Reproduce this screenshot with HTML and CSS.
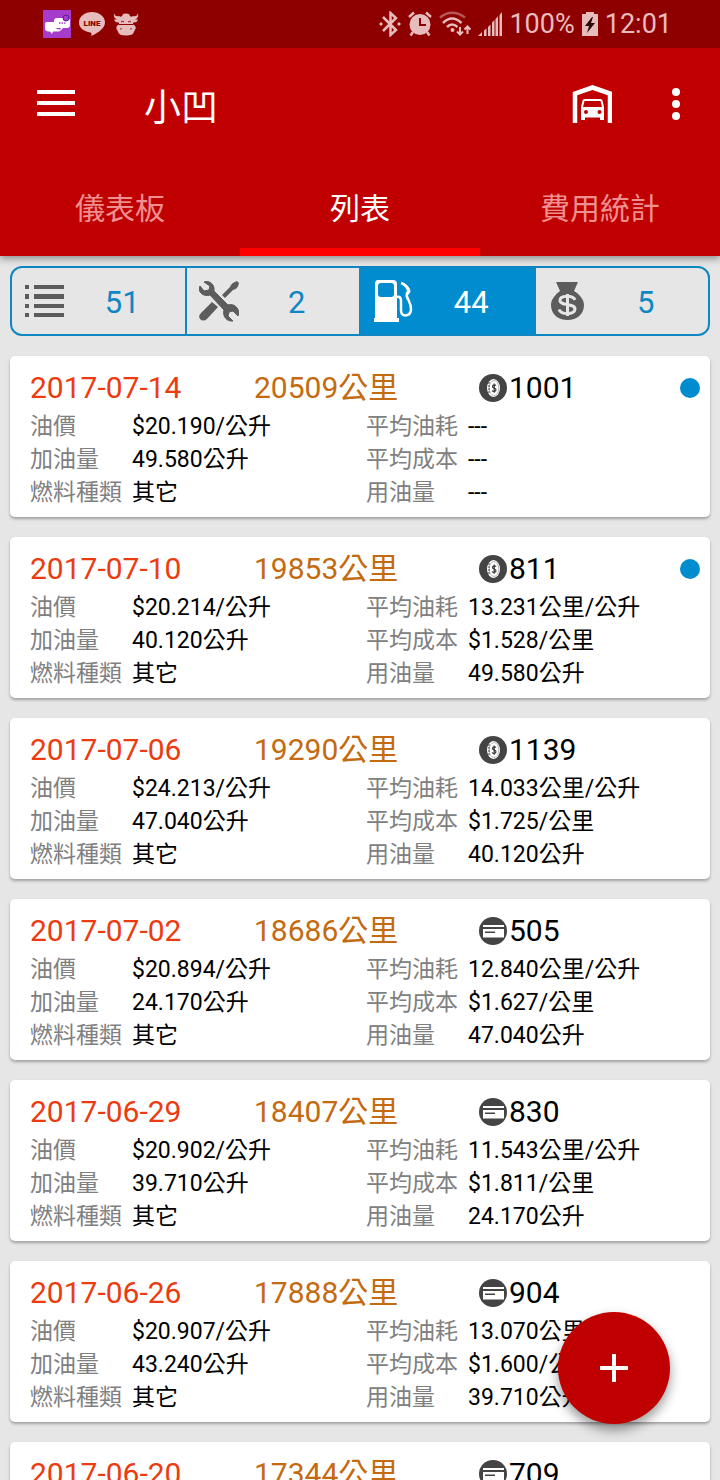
FILE: index.html
```html
<!DOCTYPE html>
<html lang="zh-Hant">
<head>
  <meta charset="UTF-8">
  <meta name="viewport" content="width=device-width, initial-scale=1">
  <title>小凹</title>

  <link rel="stylesheet" href="styles.css">
</head>
<body>
  <!-- shared icons -->
  <svg class="icon-defs" aria-hidden="true">
    <symbol id="icon-coin" viewBox="0 0 28 28">
      <circle cx="14" cy="14" r="14" fill="#444"/>
      <ellipse cx="14.500" cy="14" rx="6.500" ry="9" fill="#fff"/>
      <ellipse cx="15" cy="14" rx="4.800" ry="7.500" fill="none" stroke="#888" stroke-width="0.600"/>
      <path d="M10 8V20" stroke="#444" stroke-width="1" stroke-dasharray="2 1"/>
      <path d="M17 11.600C16 10.300 13.500 10.500 13.500 12.400C13.500 14.200 17 13.800 17 15.800C17 17.700 14 18 13 16.500M15.200 9.500V18.800" fill="none" stroke="#333" stroke-width="1.200"/>
    </symbol>
    <symbol id="icon-card" viewBox="0 0 28 28">
      <circle cx="14" cy="14" r="14" fill="#444"/>
      <path d="M4 8H25V20.500H4Z" fill="#fff"/>
      <path d="M4 10H25V12H4ZM6 14.500H16V16H6Z" fill="#444"/>
    </symbol>
  </svg>

  <div class="app">
    <header class="app-header">
      <div class="status-bar">
        <div class="status-group">
          <svg width="28" height="28" viewBox="0 0 28 28" aria-hidden="true">
            <rect width="28" height="28" rx="1" fill="#a63ccb"/>
            <path d="M4 12H12V16Q13 20 18 19.500V20Q17 21.500 15 21.500H10L9 24L7 21.500H5Q2 21 2 18V14Q2 12 4 12Z" fill="#fff"/>
            <path d="M14 8H24Q27 8 27 11V15Q27 18 24 18H20L18 20.500L17.500 18H14Q11 18 11 15V11Q11 8 14 8Z" fill="#fff"/>
            <path d="M16 13H17.500M18.500 13H20M21 13H22.500" stroke="#a63ccb" stroke-width="1.500"/>
            <circle cx="23" cy="8" r="3" fill="#a63ccb" stroke="#5b1c87" stroke-width="1"/>
          </svg>
          <svg width="26" height="26" viewBox="0 0 26 26" aria-hidden="true">
            <path d="M13 1C6 1 0 5.500 0 11.500C0 17 5 20.500 11.500 21.500C13 22 12.500 23.500 12 25C16 23.500 26 18 26 11.500C26 5.500 20 1 13 1Z" fill="#e6bcbc"/>
            <text class="line-text" x="13" y="15" text-anchor="middle">LINE</text>
          </svg>
          <svg width="26" height="26" viewBox="0 0 26 26" aria-hidden="true">
            <path d="M1 2Q2 6 6 5Q9 7 10 3Q13 2 16 3Q17 7 20 5Q24 6 25 2Q26 7 22 8.500H25Q24 12 20 11.500V13H6V11.500Q2 12 1 8.500H4Q0 7 1 2Z" fill="#e6bcbc"/>
            <path d="M6 13.500H20Q23.500 15 22.500 18Q21 20 21 21Q20 24.500 13 24.500Q6 24.500 5 21Q5 20 3.500 18Q2.500 15 6 13.500Z" fill="#e6bcbc"/>
            <path d="M8 11Q9.500 9.500 11 11M15 11Q16.500 9.500 18 11M6 13.500H20M8 17V18.500M18 17V18.500" fill="none" stroke="#8e0000" stroke-width="1"/>
          </svg>
        </div>
        <div class="status-group">
          <svg width="22" height="26" viewBox="0 0 22 26" aria-hidden="true">
            <path d="M4 6L17 19L11.500 24V2L17 7L4 20" fill="none" stroke="#e6bcbc" stroke-width="2.500"/>
            <path d="M2 11L4 13L2 15L0 13ZM20 11L22 13L20 15L18 13Z" fill="#e6bcbc"/>
          </svg>
          <svg width="24" height="26" viewBox="0 0 24 26" aria-hidden="true">
            <circle cx="12" cy="13.500" r="10.500" fill="#e6bcbc"/>
            <path d="M1 6L6 1.500M18 1.500L23 6M5 21L2.500 24.500M19 21L21.500 24.500" stroke="#e6bcbc" stroke-width="2.500"/>
            <path d="M12 7V14H18" fill="none" stroke="#8e0000" stroke-width="2"/>
          </svg>
          <svg width="32" height="26" viewBox="0 0 32 26" fill="none" aria-hidden="true">
            <path d="M1 6.500Q13 -3 26 6.500" stroke="#b65858" stroke-width="2.500"/>
            <path d="M4 12Q13 3 22.500 12M8 16Q13 11 18.500 16" stroke="#e6bcbc" stroke-width="2.500"/>
            <circle cx="13.500" cy="19" r="2" fill="#e6bcbc"/>
            <path d="M21 16V23.500M18 20.500L21 23.500L24 20.500M28.500 23V15.500M25.500 18.500L28.500 15.500L31.500 18.500" stroke="#e6bcbc" stroke-width="2"/>
          </svg>
          <svg width="24" height="26" viewBox="0 0 24 26" aria-hidden="true">
            <path d="M0 25L4 21V25ZM6 19.500L8.500 17.500V25H6ZM10 16L12.500 13.500V25H10ZM14 11.500L16.500 9V25H14ZM17.500 8L20 5.500V25H17.500ZM21.500 4L24 1V25H21.500Z" fill="#e6bcbc"/>
          </svg>
          <span class="status-text">100%</span>
          <svg width="16" height="26" viewBox="0 0 16 26" aria-hidden="true">
            <path d="M4 1H12V3H16V25H0V3H4Z" fill="#e6bcbc"/>
            <path d="M10 6L3 15H7L5 22L13 12H9L11 6Z" fill="#2e0808"/>
          </svg>
          <span class="status-text">12:01</span>
        </div>
      </div>

      <div class="toolbar">
        <button class="icon-button" type="button" aria-label="選單">
          <svg width="38" height="28" viewBox="0 0 38 28">
            <path d="M0 0H38V4H0ZM0 11H38V15H0ZM0 22H38V26H0Z" fill="#fff"/>
          </svg>
        </button>
        <h1 class="toolbar-title">小凹</h1>
        <button class="icon-button" type="button" aria-label="車庫">
          <svg width="40" height="38" viewBox="0 0 40 38">
            <path d="M3 38V8.500L20.500 2.500L38 8.500V38" fill="none" stroke="#fff" stroke-width="4.500"/>
            <path d="M12.500 14H28.500Q30 14 30.500 15.500L32 22V35H28V32.500H13V35H9V22L10.500 15.500Q11 14 12.500 14ZM12.500 16L11 22H30L28.500 16Z" fill="#fff" fill-rule="evenodd"/>
            <circle cx="14" cy="27" r="2" fill="#c00000"/>
            <circle cx="27.500" cy="27" r="2" fill="#c00000"/>
          </svg>
        </button>
        <button class="icon-button" type="button" aria-label="更多">
          <svg width="8" height="32" viewBox="0 0 8 32" fill="#fff">
            <circle cx="4" cy="4" r="4"/>
            <circle cx="4" cy="16" r="4"/>
            <circle cx="4" cy="28" r="4"/>
          </svg>
        </button>
      </div>

      <nav class="tabs">
        <button class="tab" type="button">儀表板</button>
        <button class="tab tab-active" type="button" aria-current="page">列表</button>
        <button class="tab" type="button">費用統計</button>
      </nav>
    </header>

    <main class="content">
      <div class="filters">
        <button class="filter" type="button" aria-pressed="false">
          <svg width="40" height="42" viewBox="0 0 40 42" fill="#5c5c5c" aria-hidden="true">
            <path d="M1 5H5V9H1ZM10 5H40V9H10ZM1 14H5V19H1ZM10 14H40V19H10ZM1 24H5V28H1ZM10 24H40V28H10ZM1 33H5V37H1ZM10 33H40V37H10Z"/>
          </svg>
          <span class="filter-count">51</span>
        </button>
        <button class="filter" type="button" aria-pressed="false">
          <svg width="40" height="42" viewBox="0 0 40 42" fill="#5c5c5c" aria-hidden="true">
            <path d="M13 22L19 27L8 39Q4 42 1 39Q-1 36 2 33Z"/>
            <path d="M23 15L31 7Q32 3 38 1L40 3Q39 9 34 10L26 18Z"/>
            <path d="M5 2C10 0 16 4 15 11L29 25C35 23 40 28 40 34L39 36L34 31L30 32L29 36L34 41C28 42 23 36 25 30L11 15C5 17 0 13 0 8L1 6L5 11L10 10L11 6Z" stroke="#5c5c5c"/>
          </svg>
          <span class="filter-count">2</span>
        </button>
        <button class="filter filter-active" type="button" aria-pressed="true">
          <svg width="40" height="42" viewBox="0 0 40 42" aria-hidden="true">
            <path d="M5 0H20Q24 0 24 4V38H26V42H1V38H2V4Q2 0 5 0ZM8 3Q5 3 5 6V14Q5 17 8 17H18Q21 17 21 14V6Q21 3 18 3Z" fill="#fff" fill-rule="evenodd"/>
            <path d="M24 17Q28 16 28 21V30Q28 35.500 32.500 35.500Q38 35 38 29Q38 25 35.500 20Q33 17 34 13L36 11Q34 5 28 3" fill="none" stroke="#fff" stroke-width="2.500"/>
            <path d="M30 3Q37 6 37.500 12L35 15Q34 8 30 5Z" fill="#fff"/>
          </svg>
          <span class="filter-count">44</span>
        </button>
        <button class="filter" type="button" aria-pressed="false">
          <svg width="40" height="42" viewBox="0 0 40 42" aria-hidden="true">
            <path d="M8 2H30L26 11C31 14 36 19 36 25C36 34 29 40 19.500 40C10 40 3 34 3 25C3 19 8 14 12 11Z" fill="#5c5c5c"/>
            <path d="M27 20C25 15 12 15 12 20.500C12 26 27 23 27 29C27 35 13 35 11 29.500M19.500 14V36" fill="none" stroke="#e6e6e6" stroke-width="3"/>
          </svg>
          <span class="filter-count">5</span>
        </button>
      </div>

      <article class="card">
        <div class="card-header">
          <span class="date">2017-07-14</span>
          <span class="mileage">20509公里</span>
          <span class="amount"><svg class="pay-icon" aria-hidden="true"><use href="#icon-coin"/></svg>1001<i class="dot"></i></span>
        </div>
        <dl class="details">
          <dt>油價</dt><dd>$20.190/公升</dd>
          <dt>平均油耗</dt><dd>---</dd>
          <dt>加油量</dt><dd>49.580公升</dd>
          <dt>平均成本</dt><dd>---</dd>
          <dt>燃料種類</dt><dd>其它</dd>
          <dt>用油量</dt><dd>---</dd>
        </dl>
      </article>

      <article class="card">
        <div class="card-header">
          <span class="date">2017-07-10</span>
          <span class="mileage">19853公里</span>
          <span class="amount"><svg class="pay-icon" aria-hidden="true"><use href="#icon-coin"/></svg>811<i class="dot"></i></span>
        </div>
        <dl class="details">
          <dt>油價</dt><dd>$20.214/公升</dd>
          <dt>平均油耗</dt><dd>13.231公里/公升</dd>
          <dt>加油量</dt><dd>40.120公升</dd>
          <dt>平均成本</dt><dd>$1.528/公里</dd>
          <dt>燃料種類</dt><dd>其它</dd>
          <dt>用油量</dt><dd>49.580公升</dd>
        </dl>
      </article>

      <article class="card">
        <div class="card-header">
          <span class="date">2017-07-06</span>
          <span class="mileage">19290公里</span>
          <span class="amount"><svg class="pay-icon" aria-hidden="true"><use href="#icon-coin"/></svg>1139</span>
        </div>
        <dl class="details">
          <dt>油價</dt><dd>$24.213/公升</dd>
          <dt>平均油耗</dt><dd>14.033公里/公升</dd>
          <dt>加油量</dt><dd>47.040公升</dd>
          <dt>平均成本</dt><dd>$1.725/公里</dd>
          <dt>燃料種類</dt><dd>其它</dd>
          <dt>用油量</dt><dd>40.120公升</dd>
        </dl>
      </article>

      <article class="card">
        <div class="card-header">
          <span class="date">2017-07-02</span>
          <span class="mileage">18686公里</span>
          <span class="amount"><svg class="pay-icon" aria-hidden="true"><use href="#icon-card"/></svg>505</span>
        </div>
        <dl class="details">
          <dt>油價</dt><dd>$20.894/公升</dd>
          <dt>平均油耗</dt><dd>12.840公里/公升</dd>
          <dt>加油量</dt><dd>24.170公升</dd>
          <dt>平均成本</dt><dd>$1.627/公里</dd>
          <dt>燃料種類</dt><dd>其它</dd>
          <dt>用油量</dt><dd>47.040公升</dd>
        </dl>
      </article>

      <article class="card">
        <div class="card-header">
          <span class="date">2017-06-29</span>
          <span class="mileage">18407公里</span>
          <span class="amount"><svg class="pay-icon" aria-hidden="true"><use href="#icon-card"/></svg>830</span>
        </div>
        <dl class="details">
          <dt>油價</dt><dd>$20.902/公升</dd>
          <dt>平均油耗</dt><dd>11.543公里/公升</dd>
          <dt>加油量</dt><dd>39.710公升</dd>
          <dt>平均成本</dt><dd>$1.811/公里</dd>
          <dt>燃料種類</dt><dd>其它</dd>
          <dt>用油量</dt><dd>24.170公升</dd>
        </dl>
      </article>

      <article class="card">
        <div class="card-header">
          <span class="date">2017-06-26</span>
          <span class="mileage">17888公里</span>
          <span class="amount"><svg class="pay-icon" aria-hidden="true"><use href="#icon-card"/></svg>904</span>
        </div>
        <dl class="details">
          <dt>油價</dt><dd>$20.907/公升</dd>
          <dt>平均油耗</dt><dd>13.070公里/公升</dd>
          <dt>加油量</dt><dd>43.240公升</dd>
          <dt>平均成本</dt><dd>$1.600/公里</dd>
          <dt>燃料種類</dt><dd>其它</dd>
          <dt>用油量</dt><dd>39.710公升</dd>
        </dl>
      </article>

      <article class="card">
        <div class="card-header">
          <span class="date">2017-06-20</span>
          <span class="mileage">17344公里</span>
          <span class="amount"><svg class="pay-icon" aria-hidden="true"><use href="#icon-card"/></svg>709</span>
        </div>
      </article>
    </main>

    <button class="fab" type="button" aria-label="新增">
      <svg width="28" height="28" viewBox="0 0 28 28">
        <path d="M12 0H16V12H28V16H16V28H12V16H0V12H12Z" fill="#fff"/>
      </svg>
    </button>
  </div>
</body>
</html>
```
FILE: styles.css
```css
* {
  box-sizing: border-box;
}

body {
  background-color: #e6e6e6;
  color: #000;
  font-family: Roboto, "Noto Sans CJK TC", sans-serif;
  margin: 0;
}

button {
  background: none;
  border: 0;
  cursor: pointer;
  font-family: inherit;
  padding: 0;
}

svg {
  display: block;
  flex: none;
}

.icon-defs {
  height: 0;
  position: absolute;
  width: 0;
}

.app {
  display: flex;
  flex-direction: column;
  height: 100vh;
}

/* header */
.app-header {
  background-color: #c00000;
  box-shadow: 0 2px 8px rgba(0, 0, 0, 0.45);
  flex: none;
  z-index: 1;
}

.status-bar {
  align-items: center;
  background-color: #8e0000;
  display: flex;
  height: 48px;
  justify-content: space-between;
  padding: 0 48px 0 43px;
}

.status-group {
  align-items: center;
  display: flex;
  gap: 8px;
}

.status-group + .status-group {
  gap: 7px;
}

.status-text {
  color: #e6bcbc;
  font-size: 27px;
}

.line-text {
  fill: #8e0000;
  font-family: Roboto, sans-serif;
  font-size: 8px;
  font-weight: 900;
}

.toolbar {
  align-items: center;
  display: flex;
  height: 112px;
  padding: 0 40px 0 37px;
}

.toolbar-title {
  color: #fff;
  flex: 1;
  font-size: 37px;
  font-weight: 400;
  margin: 2px 0 0 69px;
}

.icon-button + .icon-button {
  margin-left: 60px;
}

.tabs {
  display: flex;
}

.tab {
  border-bottom: 8px solid transparent;
  border-top: 4px solid transparent;
  color: #ee9090;
  flex: 1;
  font-size: 30px;
  height: 96px;
}

.tab-active {
  border-bottom-color: #ff0000;
  color: #fff;
}

/* list */
.content {
  display: flex;
  flex: 1;
  flex-direction: column;
  gap: 20px;
  overflow-y: auto;
  padding: 10px 10px 0;
  scrollbar-width: none;
}

.filters {
  border: 2px solid #0f87c3;
  border-radius: 12px;
  display: flex;
  flex: none;
  height: 70px;
  overflow: hidden;
}

.filter {
  align-items: center;
  color: #0f87c3;
  display: flex;
  flex: 1;
  font-size: 31px;
  padding: 0 4px 0 12px;
}

.filter + .filter {
  border-left: 2px solid #0f87c3;
}

.filter-count {
  flex: 1;
  padding-top: 2px;
  text-align: center;
}

.filter-active {
  background-color: #008ccf;
  color: #fff;
}

.card {
  background-color: #fff;
  border-radius: 5px;
  box-shadow: 0 2px 3px rgba(0, 0, 0, 0.3);
  flex: none;
  padding: 12px 8px 8px 20px;
}

.card-header {
  display: grid;
  font-size: 30px;
  grid-template-columns: repeat(3, 1fr);
  line-height: 40px;
}

.date {
  color: #ec3b10;
}

.mileage {
  color: #c46a10;
}

.amount {
  align-items: center;
  display: flex;
  gap: 2px;
  padding: 0 2px 0 1px;
}

.pay-icon {
  height: 28px;
  width: 28px;
}

.dot {
  background-color: #008ccf;
  border-radius: 50%;
  height: 20px;
  margin-left: auto;
  width: 20px;
}

.details {
  display: grid;
  font-size: 23px;
  grid-template-columns: 102px 1fr 102px 1fr;
  line-height: 33px;
  margin: 2px 0 0;
}

.details dt {
  color: #808080;
}

.details dd {
  margin: 0;
  white-space: nowrap;
}

.fab {
  align-items: center;
  background-color: #c00000;
  border-radius: 50%;
  bottom: 56px;
  box-shadow: 0 6px 12px rgba(0, 0, 0, 0.4);
  display: flex;
  height: 112px;
  justify-content: center;
  position: fixed;
  right: 50px;
  width: 112px;
  z-index: 2;
}
```
